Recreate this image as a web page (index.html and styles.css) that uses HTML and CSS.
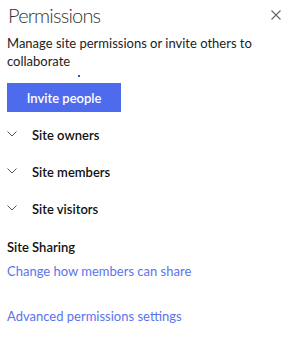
FILE: index.html
```html
<!DOCTYPE html>
<html lang="en">
<head>
    <meta charset="UTF-8">
    <meta name="viewport" content="width=device-width, initial-scale=1.0">
    <title>Permissions</title>
    <link rel="stylesheet" href="styles.css">
</head>
<body>
    <div class="panel">
        <header class="panel-header">
            <h1>Permissions</h1>
            <button class="close" aria-label="Close">
                <svg width="10" height="10" viewBox="0 0 10 10">
                    <path d="M0.5 0.5L9.5 9.5M9.5 0.5L0.5 9.5" stroke="#666" stroke-width="1.1" fill="none"/>
                </svg>
            </button>
        </header>

        <p class="intro">Manage site permissions or invite others to collaborate</p>
        <span class="dot"></span>

        <button class="invite">Invite people</button>

        <ul class="groups">
            <li>
                <svg class="chevron" width="10" height="6" viewBox="0 0 10 6">
                    <path d="M0.5 0.5L5 5L9.5 0.5" stroke="#555" stroke-width="1" fill="none"/>
                </svg>
                Site owners
            </li>
            <li>
                <svg class="chevron" width="10" height="6" viewBox="0 0 10 6">
                    <path d="M0.5 0.5L5 5L9.5 0.5" stroke="#555" stroke-width="1" fill="none"/>
                </svg>
                Site members
            </li>
            <li>
                <svg class="chevron" width="10" height="6" viewBox="0 0 10 6">
                    <path d="M0.5 0.5L5 5L9.5 0.5" stroke="#555" stroke-width="1" fill="none"/>
                </svg>
                Site visitors
            </li>
        </ul>

        <h2>Site Sharing</h2>
        <a href="#" class="link">Change how members can share</a>
        <a href="#" class="link advanced">Advanced permissions settings</a>
    </div>
</body>
</html>
```

FILE: styles.css
```css
body {
    margin: 0;
    padding: 0;
    font-family: Lato, "Noto Sans", Arial, sans-serif;
    font-size: 13px;
    color: #222;
    background: #fff;
}

.panel {
    padding: 0 8px 0 7px;
}

.panel-header {
    display: flex;
    justify-content: space-between;
    align-items: center;
    height: 30px;
}

.panel-header h1 {
    margin: 0 0 0 1px;
    font-size: 20px;
    font-weight: 300;
    letter-spacing: -0.8px;
    color: #333;
}

.close {
    background: none;
    border: none;
    padding: 0;
    margin-right: 4px;
    display: flex;
}

.intro {
    margin: 4px 0 0;
    line-height: 18px;
}

.dot {
    display: block;
    width: 2px;
    height: 2px;
    margin: 5px 0 0 71px;
    background: #3b4fd8;
}

.invite {
    display: block;
    margin-top: 6px;
    width: 114px;
    height: 29px;
    border: none;
    background-color: #4f6bed;
    color: white;
    font-family: inherit;
    font-size: 13px;
    font-weight: 600;
    padding: 0;
}

.groups {
    list-style: none;
    margin: 5px 0 0;
    padding: 0;
}

.groups li {
    display: flex;
    align-items: center;
    height: 37px;
    line-height: 37px;
    font-weight: 600;
    color: #111;
}

.chevron {
    margin: -3px 15px 0 0;
}

h2 {
    margin: 10px 0 0;
    font-size: 13px;
    line-height: 18px;
    font-weight: 600;
    color: #111;
}

.link {
    display: block;
    margin-top: 6px;
    line-height: 18px;
    color: #5b73ee;
    text-decoration: none;
}

.advanced {
    margin-top: 27px;
}
```
